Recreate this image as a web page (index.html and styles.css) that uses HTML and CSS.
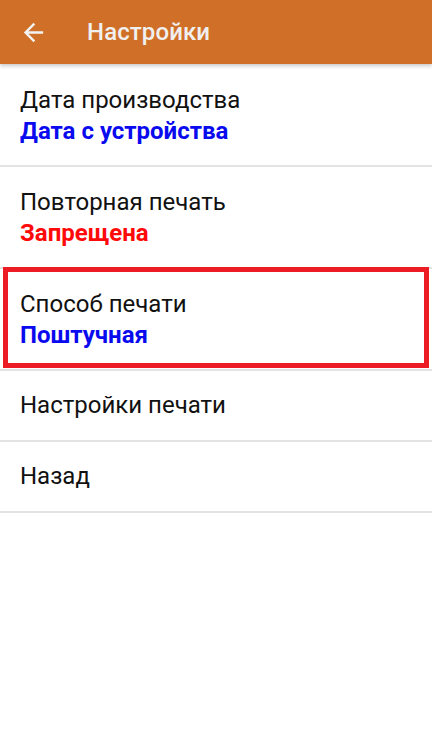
FILE: index.html
```html
<!DOCTYPE html>
<html lang="ru">
<head>
<meta charset="utf-8">
<title>Настройки</title>
<link rel="stylesheet" href="styles.css">
</head>
<body>
<header class="appbar">
  <button class="back" aria-label="Назад">
    <svg viewBox="0 0 24 24" width="29" height="29"><path d="M20 11H7.83l5.59-5.59L12 4l-8 8 8 8 1.41-1.41L7.83 13H20v-2z" fill="#f2f2f2"/></svg>
  </button>
  <h1 class="title">Настройки</h1>
</header>
<ul class="list">
  <li class="item two">
    <div class="label">Дата производства</div>
    <div class="value blue">Дата с устройства</div>
  </li>
  <li class="item two">
    <div class="label">Повторная печать</div>
    <div class="value red">Запрещена</div>
  </li>
  <li class="item two selected">
    <div class="label">Способ печати</div>
    <div class="value blue">Поштучная</div>
    <span class="highlight"></span>
  </li>
  <li class="item one">
    <div class="label">Настройки печати</div>
  </li>
  <li class="item one">
    <div class="label">Назад</div>
  </li>
</ul>
</body>
</html>
```
FILE: styles.css
```css
html, body {
  margin: 0;
  padding: 0;
  background: #ffffff;
  font-family: Roboto, "Noto Sans", "Liberation Sans", sans-serif;
}

.appbar {
  position: relative;
  z-index: 2;
  height: 64px;
  background: #d07028;
  display: flex;
  align-items: center;
  box-shadow: 0 2px 4px rgba(0, 0, 0, 0.22);
}

.back {
  margin: 0 0 0 19px;
  padding: 0;
  width: 29px;
  height: 29px;
  border: 0;
  background: transparent;
  display: flex;
}

.title {
  margin: 0 0 0 39px;
  font-size: 24px;
  font-weight: 500;
  color: #f0f0f0;
  letter-spacing: 0.1px;
}

.list {
  list-style: none;
  margin: 0;
  padding: 1px 0 0 0;
}

.item {
  position: relative;
  padding: 20px 20px 18px 20px;
  border-bottom: 2px solid #e3e3e3;
  font-size: 24px;
  line-height: 31px;
}

.item.one {
  padding-top: 19px;
  padding-bottom: 19px;
}

.label {
  color: #111111;
}

.value {
  font-weight: 700;
}

.blue {
  color: #0a0aee;
}

.red {
  color: #ff0a0a;
}

.highlight {
  position: absolute;
  top: -2px;
  left: 3px;
  right: 3px;
  bottom: 1px;
  border: 5px solid #ec1c24;
  pointer-events: none;
}
```
